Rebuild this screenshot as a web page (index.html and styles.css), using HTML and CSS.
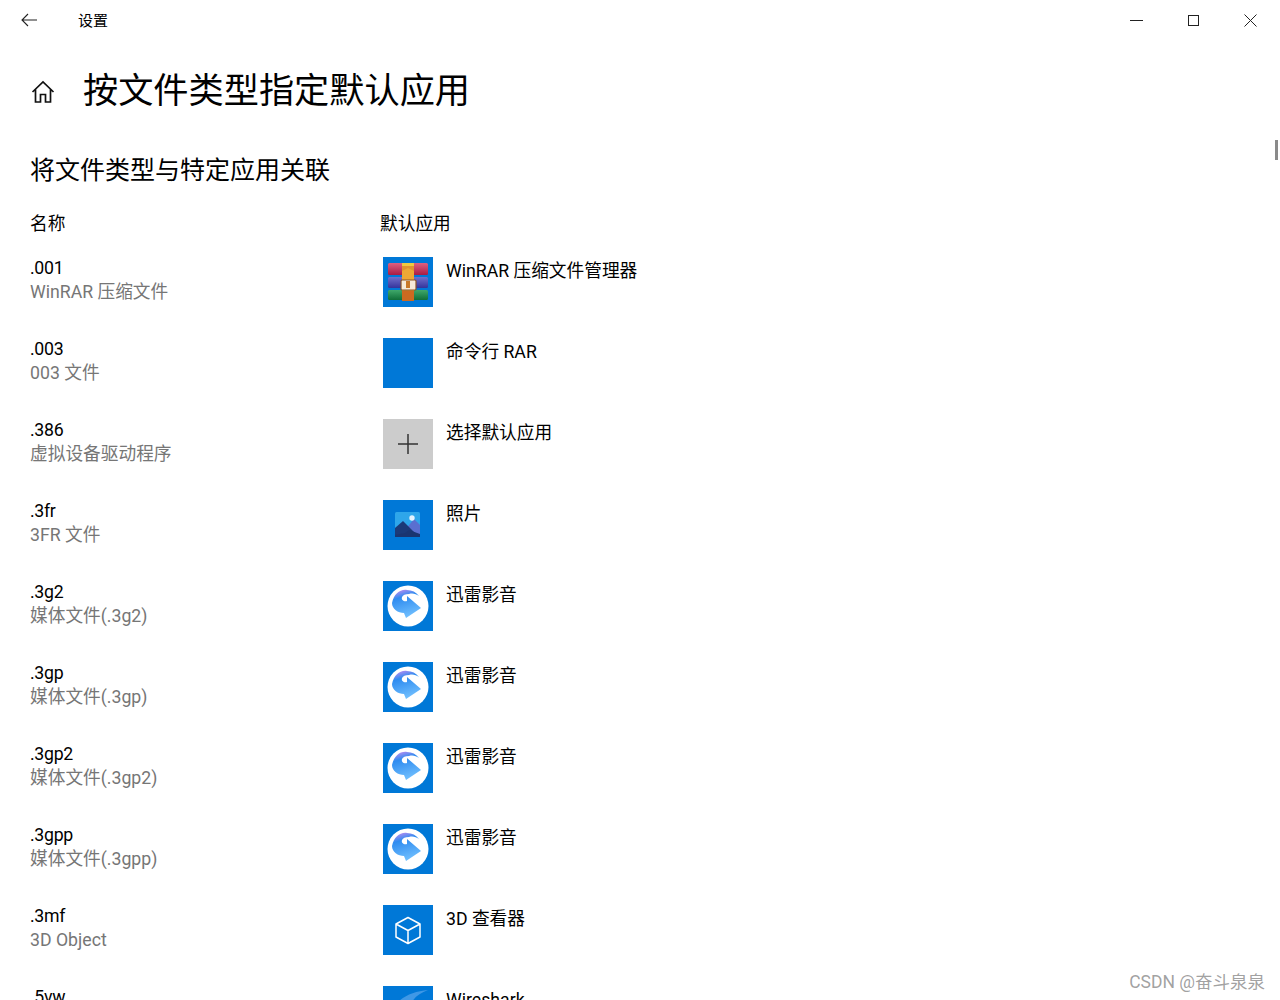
FILE: index.html
```html
<!DOCTYPE html>
<html lang="zh-CN">
<head>
<meta charset="UTF-8">
<title>设置</title>
<link rel="stylesheet" href="styles.css">
</head>
<body>
<svg class="defs" width="0" height="0">
  <defs>
    <linearGradient id="xl" x1="0.3" y1="0" x2="0.6" y2="1">
      <stop offset="0" stop-color="#b08cf2"/>
      <stop offset="0.25" stop-color="#2f8cf0"/>
      <stop offset="1" stop-color="#74c2ff"/>
    </linearGradient>
    <linearGradient id="rar-red" x1="0" y1="0" x2="0" y2="1">
      <stop offset="0" stop-color="#e0607f"/>
      <stop offset="1" stop-color="#a81c44"/>
    </linearGradient>
    <linearGradient id="rar-blue" x1="0" y1="0" x2="0" y2="1">
      <stop offset="0" stop-color="#7070cc"/>
      <stop offset="1" stop-color="#34349c"/>
    </linearGradient>
    <linearGradient id="rar-green" x1="0" y1="0" x2="0" y2="1">
      <stop offset="0" stop-color="#3fa86a"/>
      <stop offset="1" stop-color="#0f6e38"/>
    </linearGradient>
    <symbol id="xunlei" viewBox="0 0 50 50">
      <circle cx="25" cy="25" r="20.500" fill="#fff"/>
      <path d="M24 9C17 8 11 13 9 22C9 28 15 32 21 32L23 37L38 27L24 15L24 20C21 21 18 19 19 16C20 14 22 13 26 13C30 12 33 13 36 15C33 11 29 9 24 9Z" fill="url(#xl)"/>
    </symbol>
  </defs>
</svg>

<div class="titlebar">
  <div class="title-left">
    <svg class="back" width="18" height="14" viewBox="0 0 18 14"><path d="M8 1L2 7L8 13M2 7H17" fill="none" stroke="#222" stroke-width="1.100"/></svg>
    <span class="app-name">设置</span>
  </div>
  <div class="win-btns">
    <svg width="13" height="13" viewBox="0 0 13 13"><path d="M0 6.500H13" stroke="#222" stroke-width="1"/></svg>
    <svg width="13" height="13" viewBox="0 0 13 13"><rect x="1.500" y="1.500" width="10" height="10" fill="none" stroke="#222" stroke-width="1"/></svg>
    <svg width="13" height="13" viewBox="0 0 13 13"><path d="M0.500 0.500L12.500 12.500M12.500 0.500L0.500 12.500" stroke="#222" stroke-width="1"/></svg>
  </div>
</div>

<div class="content">
  <div class="page-head">
    <svg class="home" width="24" height="24" viewBox="0 0 24 24"><path d="M1.500 12L12 2L22.500 12M4.500 9.500V22H9.500V14.500H14.500V22H19.500V9.500" fill="none" stroke="#111" stroke-width="1.700"/></svg>
    <h1>按文件类型指定默认应用</h1>
  </div>
  <h2>将文件类型与特定应用关联</h2>
  <div class="cols">
    <div class="col-name">名称</div>
    <div>默认应用</div>
  </div>

  <div class="row">
    <div class="col-name"><div class="ext">.001</div><div class="desc">WinRAR 压缩文件</div></div>
    <div class="tile">
      <svg width="50" height="50" viewBox="0 0 50 50">
        <rect x="5" y="6" width="40" height="12" rx="1.500" fill="url(#rar-red)"/>
        <rect x="5" y="20" width="40" height="11" rx="1.500" fill="url(#rar-blue)"/>
        <rect x="5" y="33" width="40" height="10" rx="1.500" fill="url(#rar-green)"/>
        <rect x="19" y="6" width="12" height="38" fill="#e0932f"/>
        <path d="M19 6H31V9H19Z" fill="#f0c840"/>
        <path d="M19 14L25 11L31 14V23H19Z" fill="#eca835"/>
        <rect x="18" y="23" width="15" height="10" rx="1" fill="#f6ead8" stroke="#8a5426" stroke-width="1.200"/>
        <rect x="23" y="24" width="4" height="7" fill="#c87828"/>
        <rect x="19" y="34" width="12" height="10" fill="#cc6a20"/>
      </svg>
    </div>
    <div class="app">WinRAR 压缩文件管理器</div>
  </div>

  <div class="row">
    <div class="col-name"><div class="ext">.003</div><div class="desc">003 文件</div></div>
    <div class="tile"></div>
    <div class="app">命令行 RAR</div>
  </div>

  <div class="row">
    <div class="col-name"><div class="ext">.386</div><div class="desc">虚拟设备驱动程序</div></div>
    <div class="tile tile-gray">
      <svg width="20" height="20" viewBox="0 0 20 20"><path d="M0 10H20M10 0V20" stroke="#333" stroke-width="1.500"/></svg>
    </div>
    <div class="app">选择默认应用</div>
  </div>

  <div class="row">
    <div class="col-name"><div class="ext">.3fr</div><div class="desc">3FR 文件</div></div>
    <div class="tile">
      <svg width="50" height="50" viewBox="0 0 50 50">
        <rect x="12" y="12" width="25" height="25" rx="1.500" fill="#2ea6ea"/>
        <path d="M22 30L31 19L37 25V36H26Z" fill="#5a6fd0"/>
        <path d="M12 28L20 21L33 34V37H12Z" fill="#1b3a78"/>
        <path d="M22 33L26 30L37 34V37H12V35Z" fill="#1a3570"/>
        <circle cx="29" cy="18" r="2.700" fill="#e4f4ff"/>
      </svg>
    </div>
    <div class="app">照片</div>
  </div>

  <div class="row">
    <div class="col-name"><div class="ext">.3g2</div><div class="desc">媒体文件(.3g2)</div></div>
    <div class="tile"><svg width="50" height="50"><use href="#xunlei"/></svg></div>
    <div class="app">迅雷影音</div>
  </div>

  <div class="row">
    <div class="col-name"><div class="ext">.3gp</div><div class="desc">媒体文件(.3gp)</div></div>
    <div class="tile"><svg width="50" height="50"><use href="#xunlei"/></svg></div>
    <div class="app">迅雷影音</div>
  </div>

  <div class="row">
    <div class="col-name"><div class="ext">.3gp2</div><div class="desc">媒体文件(.3gp2)</div></div>
    <div class="tile"><svg width="50" height="50"><use href="#xunlei"/></svg></div>
    <div class="app">迅雷影音</div>
  </div>

  <div class="row">
    <div class="col-name"><div class="ext">.3gpp</div><div class="desc">媒体文件(.3gpp)</div></div>
    <div class="tile"><svg width="50" height="50"><use href="#xunlei"/></svg></div>
    <div class="app">迅雷影音</div>
  </div>

  <div class="row">
    <div class="col-name"><div class="ext">.3mf</div><div class="desc">3D Object</div></div>
    <div class="tile">
      <svg width="50" height="50" viewBox="0 0 50 50"><path d="M25 12.500L37 19V32L25 38.500L13 32V19ZM13 19L25 25.500L37 19M25 25.500V38.500" fill="none" stroke="#fff" stroke-width="1.500" stroke-linejoin="round"/></svg>
    </div>
    <div class="app">3D 查看器</div>
  </div>

  <div class="row">
    <div class="col-name"><div class="ext">.5vw</div></div>
    <div class="tile">
      <svg width="50" height="50" viewBox="0 0 50 50"><path d="M15 16C22 9 33 5 45 4C37 7 31 11 28 18C24 15 20 15 15 16Z" fill="#3f98e6"/></svg>
    </div>
    <div class="app">Wireshark</div>
  </div>
</div>

<div class="scroll-thumb"></div>
<div class="watermark">CSDN @奋斗泉泉</div>
</body>
</html>
```

FILE: styles.css
```css
html, body {
  margin: 0;
  height: 1000px;
  overflow: hidden;
}

body {
  position: relative;
  background: #fff;
  color: #000;
  font-family: Roboto, "Noto Sans CJK SC", sans-serif;
}

.defs {
  position: absolute;
}

.titlebar {
  display: flex;
  justify-content: space-between;
  align-items: center;
  height: 40px;
  padding: 0 23px 0 20px;
}

.title-left {
  display: flex;
  align-items: center;
}

.back {
  margin-right: 40px;
}

.app-name {
  margin-top: -2px;
  font-size: 15px;
}

.win-btns {
  display: flex;
  gap: 44px;
}

.content {
  height: 960px;
  padding-left: 30px;
  overflow: hidden;
}

.page-head {
  display: flex;
  align-items: center;
  height: 72px;
  margin-top: 14px;
}

.home {
  margin: 4px 28px 0 1px;
  flex: none;
}

h1 {
  margin: 2px 0 0;
  font-size: 35.200px;
  font-weight: 400;
  line-height: 72px;
}

h2 {
  margin: 27px 0 0;
  font-size: 25px;
  font-weight: 400;
  line-height: 36px;
}

.cols {
  display: flex;
  margin-top: 22px;
  font-size: 17.700px;
  line-height: 26px;
}

.col-name {
  width: 350px;
  flex: none;
}

.row {
  display: flex;
  align-items: flex-start;
  height: 81px;
  font-size: 17.700px;
  line-height: 24px;
}

.cols + .row {
  margin-top: 20px;
}

.ext {
  margin-top: -1px;
  letter-spacing: -0.300px;
}

.desc {
  color: #767676;
}

.tile {
  display: flex;
  align-items: center;
  justify-content: center;
  flex: none;
  width: 50px;
  height: 50px;
  margin-left: 3px;
  background: #0078d7;
}

.tile-gray {
  background: #cccccc;
}

.app {
  margin: 2px 0 0 13px;
}

.scroll-thumb {
  position: absolute;
  top: 140px;
  right: 2px;
  width: 3px;
  height: 20px;
  background: #8a8a8a;
}

.watermark {
  position: absolute;
  right: 15px;
  bottom: 7px;
  font-size: 17.500px;
  color: rgba(120, 120, 120, 0.7);
}
```
